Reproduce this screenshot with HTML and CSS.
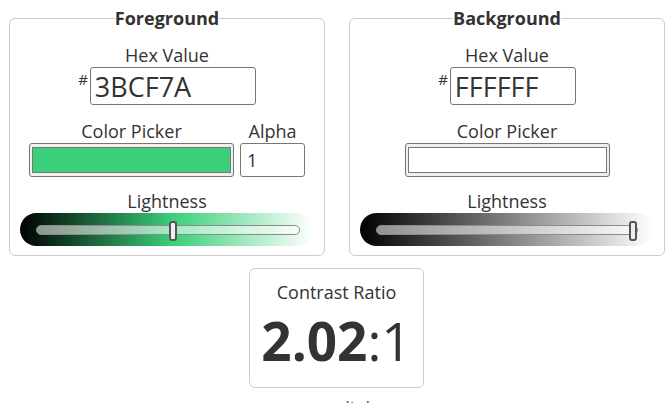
FILE: index.html
```html
<!DOCTYPE html>
<html>
<head>
<meta charset="utf-8">
<link rel="stylesheet" href="styles.css">
</head>
<body>
<div class="page">
  <div class="panels">
    <fieldset class="panel">
      <legend class="legend">Foreground</legend>
      <div class="label">Hex Value</div>
      <div class="hex-row">
        <span class="hash">#</span>
        <div class="hex-input hex-fg">3BCF7A</div>
      </div>
      <div class="picker-row">
        <div class="col">
          <div class="label">Color Picker</div>
          <div class="color-input"><div class="swatch" style="background:#3bcf7a"></div></div>
        </div>
        <div class="col">
          <div class="label">Alpha</div>
          <div class="alpha-input">1</div>
        </div>
      </div>
      <div class="label label-light">Lightness</div>
      <div class="slider" style="background:linear-gradient(to right,#000 0%,#3bcf7a 52%,#fff 100%)">
        <div class="track"><div class="thumb" style="left:calc((100% - 8px) * 0.52)"></div></div>
      </div>
    </fieldset>
    <fieldset class="panel">
      <legend class="legend">Background</legend>
      <div class="label">Hex Value</div>
      <div class="hex-row">
        <span class="hash">#</span>
        <div class="hex-input hex-bg">FFFFFF</div>
      </div>
      <div class="picker-row">
        <div class="col">
          <div class="label">Color Picker</div>
          <div class="color-input"><div class="swatch" style="background:#ffffff"></div></div>
        </div>
      </div>
      <div class="label label-light">Lightness</div>
      <div class="slider slider-bg" style="background:linear-gradient(to right,#000 0%,#fff 100%)">
        <div class="track"><div class="thumb" style="left:calc(100% - 8px)"></div></div>
      </div>
    </fieldset>
  </div>
  <div class="result">
    <div class="result-title">Contrast Ratio</div>
    <div class="ratio"><b>2.02</b>:1</div>
  </div>
  <div class="link-row"><a class="link" href="#">permalink</a></div>
</div>
</body>
</html>
```
FILE: styles.css
```css
html, body {
  margin: 0;
  padding: 0;
  background: #fff;
}
body {
  font-family: "Open Sans", "Liberation Sans", sans-serif;
  color: #333;
  font-size: 18px;
}
.page {
  padding: 6px 0 0 9px;
  width: 656px;
}
.panels {
  display: grid;
  grid-template-columns: 316px 316px;
  column-gap: 24px;
}
.panel {
  margin: 0;
  padding: 13px 10px 9px 10px;
  border: 1px solid #ccc;
  border-radius: 6px;
  min-width: 0;
  display: flex;
  flex-direction: column;
  align-items: center;
}
.legend {
  font-weight: 700;
  font-size: 18px;
  line-height: 24px;
  padding: 0;
  margin: 0 auto;
  text-align: center;
  color: #333;
}
.label {
  font-size: 18px;
  line-height: 24px;
  text-align: center;
}
.hex-row {
  display: flex;
  align-items: flex-start;
}
.hash {
  font-size: 15px;
  line-height: 15px;
  margin-top: 5px;
  margin-right: 2px;
}
.hex-input {
  height: 36px;
  border: 1px solid #767676;
  border-radius: 3px;
  font-size: 27px;
  line-height: 38px;
  padding: 0 4px;
  box-sizing: content-box;
}
.hex-fg { width: 156px; }
.hex-bg { width: 116px; }
.picker-row {
  display: flex;
  gap: 6px;
  margin-top: 14px;
}
.col {
  display: flex;
  flex-direction: column;
  align-items: center;
}
.color-input {
  width: 205px;
  height: 34px;
  box-sizing: border-box;
  border: 1px solid #767676;
  border-radius: 3px;
  background: #efefef;
  padding: 3px 2px;
  display: flex;
}
.swatch {
  flex: 1;
  border: 1px solid #777;
}
.alpha-input {
  width: 65px;
  height: 34px;
  box-sizing: border-box;
  border: 1px solid #767676;
  border-radius: 3px;
  padding: 0 6px;
  font-size: 18px;
  line-height: 32px;
  color: #1f2d4d;
}
.label-light {
  margin-top: 12px;
}
.slider {
  align-self: stretch;
  height: 33px;
  border-radius: 17px;
  padding: 0 13px 0 16px;
  display: flex;
  align-items: center;
  margin: 0 1px 0 0;
}
.slider-bg {
  padding-right: 15px;
}
.track {
  flex: 1;
  height: 10px;
  box-sizing: border-box;
  border: 1px solid #8a8a8a;
  border-radius: 5px;
  background: rgba(255, 255, 255, 0.55);
  position: relative;
}
.thumb {
  position: absolute;
  top: -5px;
  width: 8px;
  height: 20px;
  box-sizing: border-box;
  background: #eee;
  border: 2px solid #555;
  border-radius: 3px;
}
.result {
  width: 175px;
  height: 120px;
  box-sizing: border-box;
  margin: 12px auto 0 240px;
  border: 1px solid #ccc;
  border-radius: 6px;
  display: flex;
  flex-direction: column;
  align-items: center;
  padding-top: 11px;
}
.result-title {
  font-size: 18px;
  line-height: 24px;
}
.ratio {
  font-size: 53px;
  line-height: 62px;
  margin-top: 6px;
}
.ratio b {
  font-weight: 700;
}
.link-row {
  text-align: center;
  margin-top: 8px;
  padding-right: 9px;
}
.link {
  color: #1a5fd6;
  text-decoration: none;
  font-size: 18px;
  line-height: 24px;
}
```
